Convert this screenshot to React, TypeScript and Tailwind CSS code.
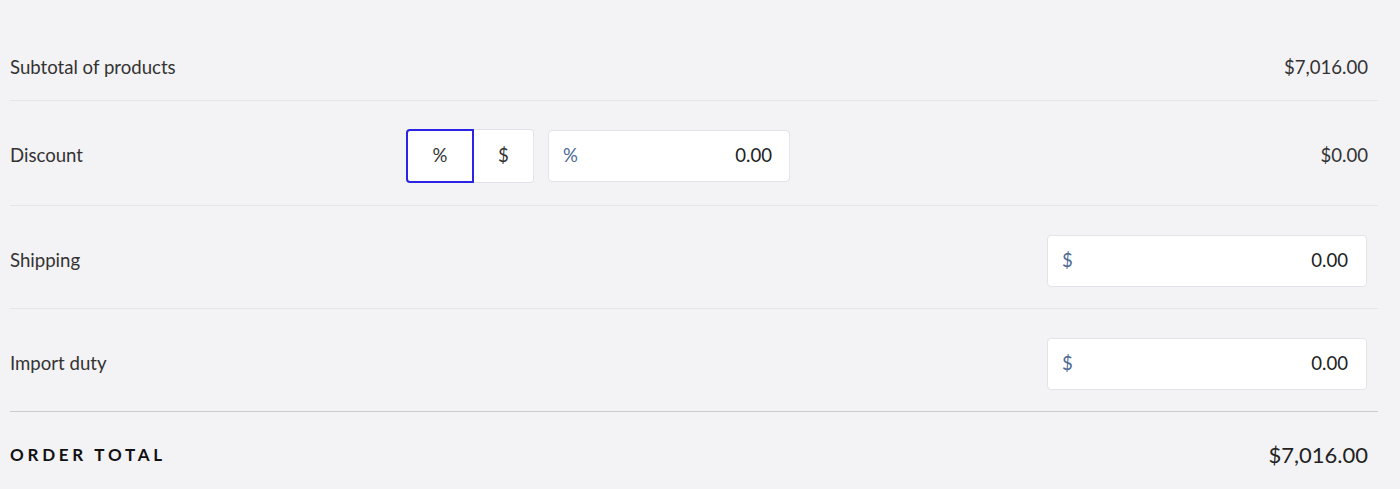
import React, { useState } from 'react';

function MoneyInput({ prefix, value, className }: { prefix: string; value: string; className: string }) {
  return (
    <div
      className={`flex h-[52px] items-center justify-between rounded-[4px] border border-[#e4e3e7] bg-white pl-[14px] ${className}`}
    >
      <span className="text-[18.6px] text-[#4d6a94]">{prefix}</span>
      <span className="text-[18.6px] text-[#222]">{value}</span>
    </div>
  );
}

export default function App() {
  const [mode, setMode] = useState<'%' | '$'>('%');

  return (
    <div
      className="min-h-screen bg-[#f3f2f5] pl-[10px] pr-[22px] pt-[35px] text-[#333]"
      style={{ fontFamily: 'Lato, "Noto Sans", sans-serif' }}
    >
      <div className="flex h-[66px] items-center justify-between border-b border-[#e6e4e8] pr-[10px]">
        <span className="text-[18.6px]">Subtotal of products</span>
        <span className="text-[18.6px]">$7,016.00</span>
      </div>

      <div className="flex items-center border-b border-[#e6e4e8] pb-[22px] pr-[10px] pt-[28px]">
        <span className="w-[396px] text-[18.6px]">Discount</span>
        <div className="flex h-[54px]">
          <button
            onClick={() => setMode('%')}
            className={
              mode === '%'
                ? 'w-[68px] rounded-l-[4px] border-2 border-[#2a25e6] bg-white text-[18.6px]'
                : 'w-[68px] rounded-l-[4px] border border-[#e4e3e7] bg-white text-[18.6px]'
            }
          >
            %
          </button>
          <button
            onClick={() => setMode('$')}
            className={
              mode === '$'
                ? 'w-[60px] rounded-r-[4px] border-2 border-[#2a25e6] bg-white text-[18.6px]'
                : 'w-[60px] rounded-r-[4px] border border-l-0 border-[#e4e3e7] bg-white text-[18.6px]'
            }
          >
            $
          </button>
        </div>
        <MoneyInput prefix={mode} value="0.00" className="ml-[14px] w-[242px] pr-[17px]" />
        <span className="ml-auto text-[18.6px]">$0.00</span>
      </div>

      <div className="flex items-center justify-between border-b border-[#e6e4e8] pb-[21px] pr-[10px] pt-[29px]">
        <span className="text-[18.6px]">Shipping</span>
        <MoneyInput prefix="$" value="0.00" className="mr-[1px] w-[320px] pr-[18px]" />
      </div>

      <div className="flex items-center justify-between border-b border-[#cdcbd0] pb-[21px] pr-[10px] pt-[29px]">
        <span className="text-[18.6px]">Import duty</span>
        <MoneyInput prefix="$" value="0.00" className="mr-[1px] w-[320px] pr-[18px]" />
      </div>

      <div className="flex items-center justify-between pr-[10px] pt-[26px]">
        <span className="text-[17px] font-bold tracking-[0.22em] text-[#111]">ORDER TOTAL</span>
        <span className="text-[22px] text-[#222]">$7,016.00</span>
      </div>
    </div>
  );
}
